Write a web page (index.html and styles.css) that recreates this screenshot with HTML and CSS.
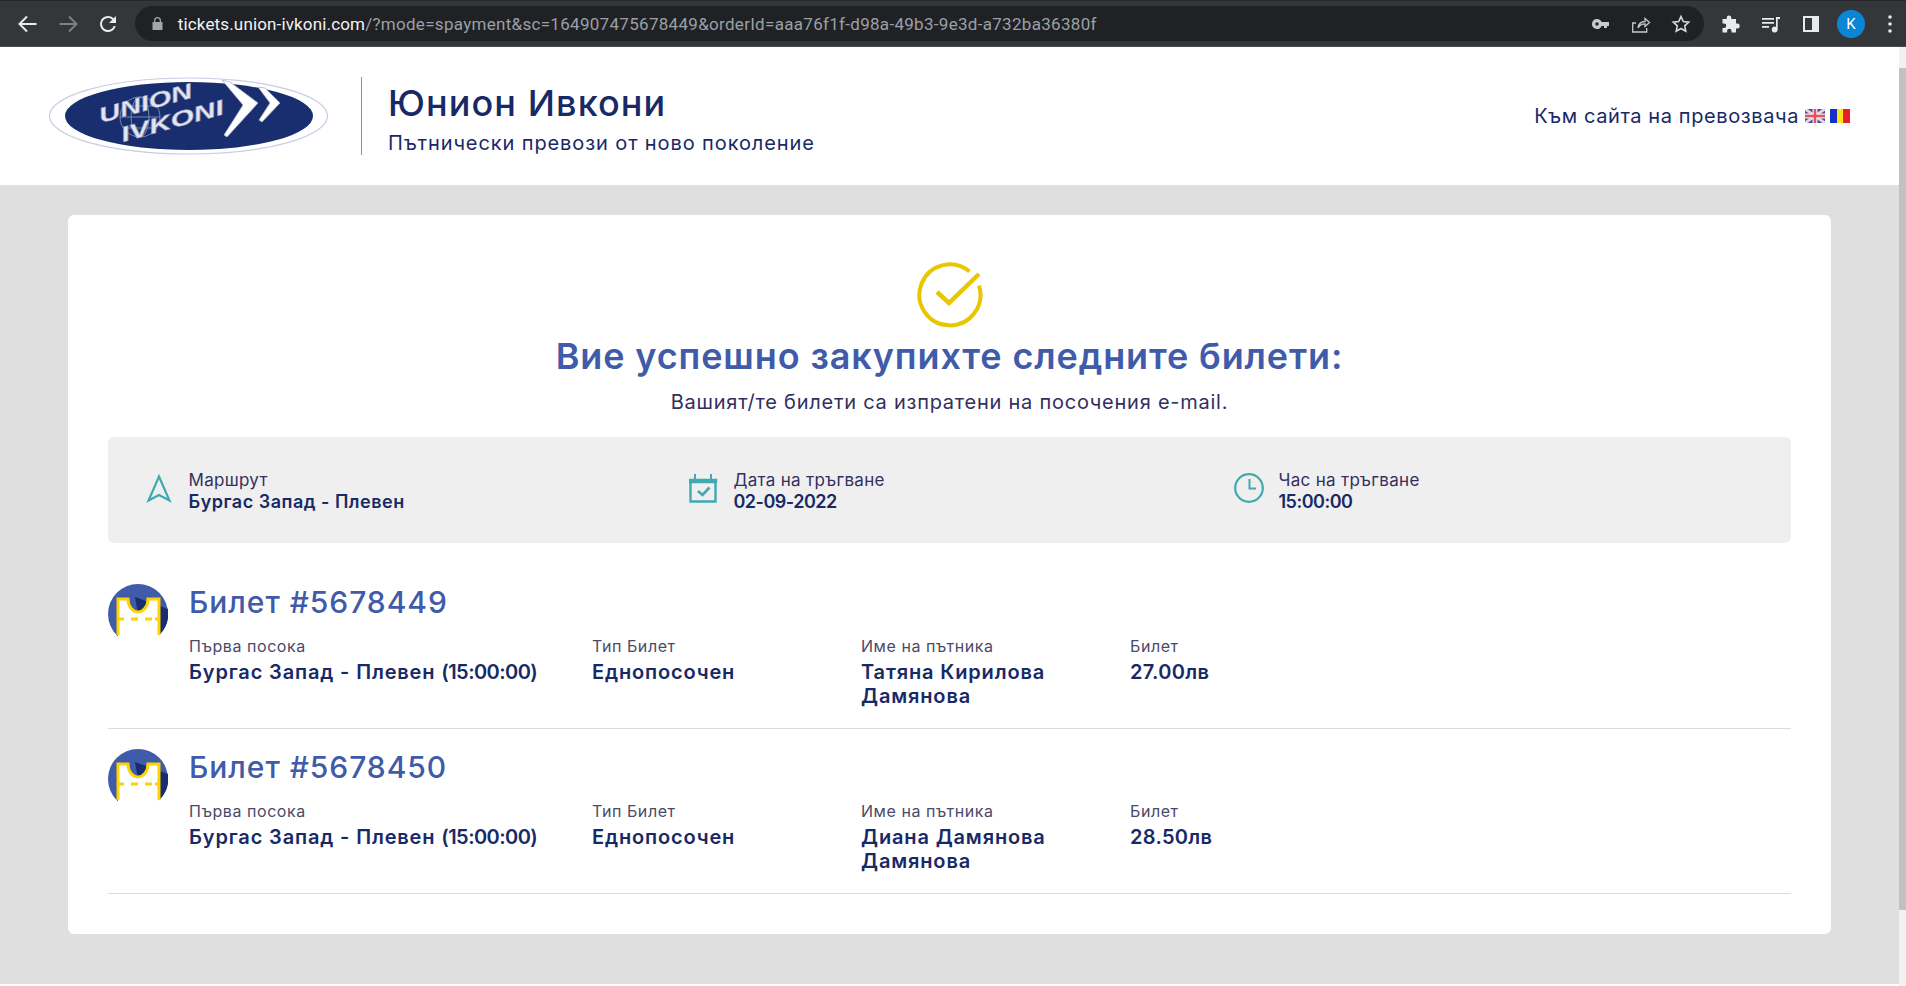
FILE: index.html
```html
<!DOCTYPE html>
<html lang="bg">

<head>
    <meta charset="UTF-8">
    <meta name="viewport" content="width=device-width, initial-scale=1.0">
    <title>Юнион Ивкони</title>
    <link rel="stylesheet" href="styles.css">
</head>

<body>
    <div class="browser-bar">
        <div class="nav-icons">
            <svg class="nav-icon" viewBox="0 0 24 24"><path d="M20.500 12H4M11 4.500L3.500 12l7.500 7.500" fill="none" stroke="#e8eaed" stroke-width="2"/></svg>
            <svg class="nav-icon" viewBox="0 0 24 24"><path d="M3.500 12H20M13 4.500l7.500 7.500-7.500 7.500" fill="none" stroke="#7d8084" stroke-width="2"/></svg>
            <svg class="nav-icon" viewBox="0 0 24 24"><path d="M17.650 6.350A7.960 7.960 0 0 0 12 4a8 8 0 1 0 7.730 10h-2.080A6 6 0 1 1 12 6c1.660 0 3.140.69 4.220 1.780L13 11h7V4z" fill="#e8eaed"/></svg>
        </div>
        <div class="address-bar">
            <svg class="lock" viewBox="0 0 11 13"><path d="M2 5V3.500a3.500 3.500 0 0 1 7 0V5h1.500v8H.500V5zm1.300 0h4.400V3.500a2.200 2.200 0 0 0-4.400 0z" fill="#a3a5a8"/></svg>
            <span class="url"><span class="url-host">tickets.union-ivkoni.com</span>/?mode=spayment&amp;sc=164907475678449&amp;orderId=aaa76f1f-d98a-49b3-9e3d-a732ba36380f</span>
            <div class="address-actions">
                <svg class="action-icon" viewBox="0 0 20 20"><path d="M6 5a5 5 0 1 0 4.600 7H13v2h3v-2h2V8h-7.400A5 5 0 0 0 6 5zm0 3.300a1.700 1.700 0 1 1 0 3.400 1.700 1.700 0 0 1 0-3.400z" fill="#c7c9cb"/></svg>
                <svg class="action-icon" viewBox="0 0 20 20"><path d="M5 9H1.700v9h14v-4M7 14c.6-4 3-6.500 7-6.500V4.500l4.500 4-4.500 4V9.800c-3 0-5.500 1.200-7 4.200z" fill="none" stroke="#c7c9cb" stroke-width="1.300"/></svg>
                <svg class="action-icon" viewBox="0 0 20 20"><path d="M10 2.500l2.300 5 5.400.6-4 3.700 1.100 5.400-4.800-2.700-4.800 2.700 1.100-5.400-4-3.700 5.400-.6z" fill="none" stroke="#d5d7d9" stroke-width="1.600"/></svg>
            </div>
        </div>
        <div class="bar-icons">
            <svg class="bar-icon" viewBox="0 0 20 20"><path d="M8 1.500a2.300 2.300 0 0 1 2.300 2.300V5H15v4.500h1.200a2.500 2.500 0 0 1 0 5H15V18.500H10.500V17a2.200 2.200 0 0 0-4.400 0v1.500H1.500V14H3a2.300 2.300 0 0 0 0-4.600H1.500V5h4.200V3.800A2.300 2.300 0 0 1 8 1.500z" fill="#e8eaed"/></svg>
            <svg class="bar-icon" viewBox="0 0 20 20"><path d="M1 4h12v1.700H1zM1 8h12v1.700H1zM1 12h7v1.700H1z" fill="#e8eaed"/><path d="M15 3h4v2h-2.300v10.500a3 3 0 1 1-1.700-2.600z" fill="#e8eaed"/></svg>
            <svg class="bar-icon" viewBox="0 0 20 20"><path d="M2 2h16v16H2z" fill="#e8eaed"/><path d="M4 4h7v12H4z" fill="#35363a"/></svg>
            <div class="avatar">K</div>
            <svg class="menu-dots" viewBox="0 0 4 18"><circle cx="2" cy="2" r="1.800"/><circle cx="2" cy="9" r="1.800"/><circle cx="2" cy="16" r="1.800"/></svg>
        </div>
    </div>

    <div class="page">
        <div class="content">
            <header class="site-header">
                <svg class="logo" viewBox="0 0 279 78">
                    <ellipse cx="139.500" cy="39" rx="139" ry="38" fill="#fff" stroke="#c9cde4" stroke-width="1.200"/>
                    <ellipse cx="140" cy="39" rx="124" ry="34" fill="#182e6e"/>
                    <g fill="none" stroke="#8f99bf" stroke-width="0.800">
                        <circle cx="91" cy="40" r="20"/>
                        <ellipse cx="91" cy="40" rx="9" ry="20"/>
                        <path d="M71 40h40M74 29h34M74 51h34"/>
                    </g>
                    <path d="M173 3l8 2 28 21-31 34-3-2 19-30z" fill="#fff" stroke="#aab0cc" stroke-width="0.800"/>
                    <path d="M209 10l7 1 15 15-18 19-3-2 11-17z" fill="#fff" stroke="#aab0cc" stroke-width="0.800"/>
                    <text class="logo-text" transform="translate(52 46) rotate(-15.500)" textLength="96" lengthAdjust="spacingAndGlyphs">UNION</text>
                    <text class="logo-text" transform="translate(74 65) rotate(-15.500)" textLength="106" lengthAdjust="spacingAndGlyphs">IVKONI</text>
                </svg>
                <div class="brand">
                    <div class="brand-name">Юнион Ивкони</div>
                    <div class="brand-slogan">Пътнически превози от ново поколение</div>
                </div>
                <div class="header-link">
                    <span>Към сайта на превозвача</span>
                    <div class="flags">
                        <svg class="flag" viewBox="0 0 20 14">
                            <rect width="20" height="14" fill="#3a4f9a"/>
                            <path d="M0 0l20 14M20 0L0 14" stroke="#e8d5dd" stroke-width="3"/>
                            <path d="M10 0v14M0 7h20" stroke="#f3eef0" stroke-width="5"/>
                            <path d="M10 0v14M0 7h20" stroke="#e8505f" stroke-width="2.500"/>
                        </svg>
                        <svg class="flag" viewBox="0 0 20 14">
                            <rect width="7" height="14" fill="#1430c8"/>
                            <rect x="7" width="6" height="14" fill="#fce21a"/>
                            <rect x="13" width="7" height="14" fill="#ee1c25"/>
                        </svg>
                    </div>
                </div>
            </header>

            <main class="card">
                <svg class="success-icon" viewBox="0 0 66 66">
                    <path d="M52.500 9.500A30.500 30.500 0 1 0 62 23.700" fill="none" stroke="#eac600" stroke-width="4"/>
                    <path d="M20 30l12 11 30-29" fill="none" stroke="#eac600" stroke-width="4.500"/>
                </svg>
                <h1 class="success-title">Вие успешно закупихте следните билети:</h1>
                <p class="success-text">Вашият/те билети са изпратени на посочения e-mail.</p>

                <div class="trip-panel">
                    <div class="trip-item">
                        <svg class="trip-icon" viewBox="0 0 30 30"><path d="M15 3.500l10.500 24-10.500-5.500-10.500 5.500z" fill="none" stroke="#40aab0" stroke-width="2.200"/></svg>
                        <div>
                            <div class="trip-label">Маршрут</div>
                            <div class="trip-value">Бургас Запад - Плевен</div>
                        </div>
                    </div>
                    <div class="trip-item">
                        <svg class="trip-icon" viewBox="0 0 30 30"><path d="M1.500 7h25v21.500h-25zM1 7h26v2H1z" fill="none" stroke="#40aab0" stroke-width="2.400"/><path d="M6 1v5M22 1v5" fill="none" stroke="#40aab0" stroke-width="2"/><path d="M9 18l4.500 4 7-7.500" fill="none" stroke="#40aab0" stroke-width="2.600"/></svg>
                        <div>
                            <div class="trip-label">Дата на тръгване</div>
                            <div class="trip-value trip-number">02-09-2022</div>
                        </div>
                    </div>
                    <div class="trip-item">
                        <svg class="trip-icon" viewBox="0 0 30 30"><circle cx="15" cy="15" r="13.800" fill="none" stroke="#40aab0" stroke-width="2.200"/><path d="M15.500 6v9.500h6.500" fill="none" stroke="#40aab0" stroke-width="2"/></svg>
                        <div>
                            <div class="trip-label">Час на тръгване</div>
                            <div class="trip-value trip-number">15:00:00</div>
                        </div>
                    </div>
                </div>

                <div class="ticket">
                    <svg class="ticket-icon" viewBox="0 0 60 60">
                        <circle cx="30" cy="30" r="30" fill="#3f5ba9"/>
                        <path d="M27 13L60 25A30 30 0 0 1 52 50L30 30z" fill="#182e6e"/>
                        <path d="M10 56V15h10a10 13 0 0 0 20 0h11v41l-8 4H18z" fill="#fff"/>
                        <path d="M10 51V15h10a10 13 0 0 0 20 0h11v36M10 35h6M23 35h7M37 35h7M47 35h4" fill="none" stroke="#ffd200" stroke-width="3"/>
                    </svg>
                    <div class="ticket-body">
                        <h2 class="ticket-title">Билет #5678449</h2>
                        <div class="ticket-row">
                            <div class="col-route"><div class="ticket-label">Първа посока</div><div class="ticket-value">Бургас Запад - Плевен <span class="ticket-time">(15:00:00)</span></div></div>
                            <div class="col-type"><div class="ticket-label">Тип Билет</div><div class="ticket-value">Еднопосочен</div></div>
                            <div class="col-name"><div class="ticket-label">Име на пътника</div><div class="ticket-value">Татяна Кирилова Дамянова</div></div>
                            <div class="col-price"><div class="ticket-label">Билет</div><div class="ticket-value ticket-price">27.00лв</div></div>
                        </div>
                    </div>
                </div>

                <div class="ticket">
                    <svg class="ticket-icon" viewBox="0 0 60 60">
                        <circle cx="30" cy="30" r="30" fill="#3f5ba9"/>
                        <path d="M27 13L60 25A30 30 0 0 1 52 50L30 30z" fill="#182e6e"/>
                        <path d="M10 56V15h10a10 13 0 0 0 20 0h11v41l-8 4H18z" fill="#fff"/>
                        <path d="M10 51V15h10a10 13 0 0 0 20 0h11v36M10 35h6M23 35h7M37 35h7M47 35h4" fill="none" stroke="#ffd200" stroke-width="3"/>
                    </svg>
                    <div class="ticket-body">
                        <h2 class="ticket-title">Билет #5678450</h2>
                        <div class="ticket-row">
                            <div class="col-route"><div class="ticket-label">Първа посока</div><div class="ticket-value">Бургас Запад - Плевен <span class="ticket-time">(15:00:00)</span></div></div>
                            <div class="col-type"><div class="ticket-label">Тип Билет</div><div class="ticket-value">Еднопосочен</div></div>
                            <div class="col-name"><div class="ticket-label">Име на пътника</div><div class="ticket-value">Диана Дамянова Дамянова</div></div>
                            <div class="col-price"><div class="ticket-label">Билет</div><div class="ticket-value ticket-price">28.50лв</div></div>
                        </div>
                    </div>
                </div>
            </main>
        </div>
        <div class="scrollbar">
            <div class="scroll-thumb"></div>
        </div>
    </div>
</body>

</html>
```

FILE: styles.css
```css
* {
    box-sizing: border-box;
}

html,
body {
    margin: 0;
    height: 100%;
    overflow: hidden;
}

body {
    font-family: Inter, "Liberation Sans", sans-serif;
    color: #182a66;
    background-color: #fff;
    display: flex;
    flex-direction: column;
}

/* browser chrome */
.browser-bar {
    height: 47px;
    flex-shrink: 0;
    display: flex;
    align-items: center;
    background-color: #35363a;
    border-top: 1px solid #26272a;
    border-bottom: 1px solid #4a4b4f;
    padding-right: 14px;
}

.nav-icons {
    display: flex;
    gap: 16px;
    padding-left: 16px;
    width: 135px;
}

.nav-icon {
    width: 24px;
    height: 24px;
}

.address-bar {
    width: 1572px;
    height: 35px;
    border-radius: 18px;
    background-color: #202124;
    display: flex;
    align-items: center;
    padding-left: 17px;
}

.lock {
    width: 11px;
    height: 13px;
    margin-right: 15px;
}

.url {
    font-family: Roboto, sans-serif;
    font-size: 17px;
    letter-spacing: 0.3px;
    color: #9aa0a6;
    white-space: nowrap;
}

.url-host {
    color: #f1f3f4;
    letter-spacing: 0.15px;
}

.address-actions {
    margin-left: auto;
    display: flex;
    gap: 20px;
    padding-right: 13px;
}

.action-icon {
    width: 20px;
    height: 20px;
}

.bar-icons {
    display: flex;
    align-items: center;
    gap: 20px;
    margin-left: 17px;
}

.bar-icon {
    width: 20px;
    height: 20px;
}

.avatar {
    width: 28px;
    height: 28px;
    border-radius: 50%;
    background-color: #0b86d4;
    color: #fff;
    font-family: Roboto, sans-serif;
    font-size: 15px;
    display: flex;
    align-items: center;
    justify-content: center;
    margin-left: -4px;
}

.menu-dots {
    width: 4px;
    height: 18px;
    fill: #e8eaed;
    margin-left: 3px;
}

/* page */
.page {
    flex: 1;
    display: flex;
    min-height: 0;
}

.content {
    flex: 1;
    min-width: 0;
    background-color: #dfdfdf;
    margin-bottom: 2px;
}

.scrollbar {
    width: 7px;
    background-color: #f1f1f1;
    padding-top: 21px;
}

.scroll-thumb {
    height: 842px;
    background-color: #c1c1c1;
}

.site-header {
    height: 138px;
    background-color: #fff;
    display: flex;
    align-items: center;
    padding: 0 49px;
}

.logo {
    width: 279px;
    height: 78px;
}

.logo-text {
    font-family: "Liberation Sans", sans-serif;
    font-weight: bold;
    font-style: italic;
    font-size: 21px;
    fill: #e3e6f0;
    stroke: #8f99bf;
    stroke-width: 0.5px;
}

.brand {
    margin-left: 33px;
    padding-left: 26px;
    padding-top: 5px;
    border-left: 1px solid #5aa5ad;
    height: 78px;
    display: flex;
    flex-direction: column;
    justify-content: center;
}

.brand-name {
    font-size: 36px;
    font-weight: 500;
    line-height: 42px;
    letter-spacing: 1.1px;
    margin-bottom: 7px;
}

.brand-slogan {
    font-size: 20px;
    line-height: 24px;
    letter-spacing: 0.9px;
}

.header-link {
    margin-left: auto;
    display: flex;
    align-items: center;
    gap: 6px;
    font-size: 20px;
    letter-spacing: 0.6px;
}

.flags {
    display: flex;
    gap: 5px;
}

.flag {
    width: 20px;
    height: 14px;
}

.card {
    margin: 30px 68px 0;
    height: 719px;
    background-color: #fff;
    border-radius: 6px;
    padding: 47px 40px 0;
    text-align: center;
}

.success-icon {
    display: block;
    width: 66px;
    height: 66px;
    margin: 0 auto;
}

.success-title {
    margin: 6px 0 0;
    font-size: 36px;
    font-weight: 600;
    line-height: 44px;
    color: #3f5ba9;
    letter-spacing: 0.88px;
}

.success-text {
    margin: 11px 0 0;
    font-size: 20px;
    line-height: 26px;
    color: #332f5e;
    letter-spacing: 0.75px;
}

.trip-panel {
    margin-top: 22px;
    height: 106px;
    background-color: #efefef;
    border-radius: 6px;
    padding: 0 24px;
    display: grid;
    grid-template-columns: repeat(3, 1fr);
    text-align: left;
}

.trip-item {
    display: flex;
    align-items: center;
    gap: 14.5px;
    padding: 2px 0 0 12px;
}

.trip-icon {
    width: 30px;
    height: 30px;
    flex-shrink: 0;
    margin-bottom: 7px;
}

.trip-label {
    font-size: 17px;
    line-height: 22px;
    letter-spacing: 0.3px;
    color: #332f5e;
}

.trip-value {
    font-size: 18px;
    font-weight: 600;
    line-height: 22px;
    letter-spacing: 0.5px;
}

.trip-number {
    letter-spacing: -0.5px;
}

.ticket {
    display: flex;
    gap: 21px;
    text-align: left;
    padding-top: 20px;
    height: 165px;
    border-bottom: 1px solid #dcdcdc;
}

.trip-panel + .ticket {
    margin-top: 21px;
}

.ticket-icon {
    width: 60px;
    height: 60px;
    flex-shrink: 0;
}

.ticket-title {
    margin: 0;
    font-size: 30px;
    font-weight: 500;
    line-height: 36px;
    color: #3f5ba9;
    letter-spacing: 0.95px;
}

.ticket-row {
    display: flex;
    margin-top: 16px;
}

.ticket-label {
    font-size: 16px;
    line-height: 20px;
    letter-spacing: 0.55px;
    color: #4a4a6a;
}

.ticket-value {
    font-size: 20px;
    font-weight: 600;
    line-height: 24px;
    letter-spacing: 0.85px;
    margin-top: 4px;
}

.ticket-time {
    letter-spacing: -0.55px;
}

.ticket-price {
    letter-spacing: 0.3px;
}

.col-route {
    width: 403px;
}

.col-type {
    width: 269px;
}

.col-name {
    width: 269px;
    padding-right: 20px;
}

.col-price {
    width: 200px;
}
```
